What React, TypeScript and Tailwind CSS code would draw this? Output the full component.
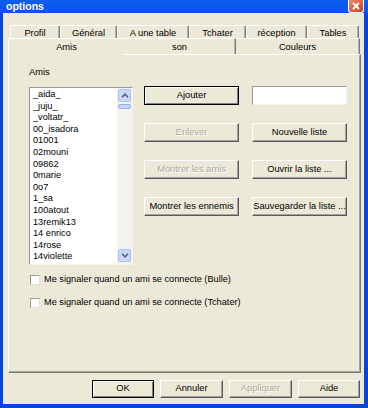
import React from 'react';
import clsx from 'clsx';

const FRIENDS = [
    '_aida_', '_juju_', '_voltatr_', '00_isadora', '01001', '02mouni', '09862', '0marie',
    '0o7', '1_sa', '100atout', '13remik13', '14 enrico', '14rose', '14violette',
];

const TOP_TABS = [
    { label: 'Profil', w: 'w-[50px]' },
    { label: 'Général', w: 'w-[57px]' },
    { label: 'A une table', w: 'w-[72px]' },
    { label: 'Tchater', w: 'w-[57px]' },
    { label: 'réception', w: 'w-[61px]' },
    { label: 'Tables', w: 'w-[52px]' },
];

interface BtnProps {
    label: string;
    disabled?: boolean;
    isDefault?: boolean;
    className?: string;
}

// classic raised button, text may overflow on both sides like the original
const Btn: React.FC<BtnProps> = ({ label, disabled, isDefault, className }) => (
    <div
        className={clsx(
            'flex items-center justify-center overflow-hidden whitespace-nowrap bg-[#ece9d8] text-[9.3px] leading-none',
            isDefault
                ? 'border border-black shadow-[inset_1px_1px_0_#fff,inset_-1px_-1px_0_#808080]'
                : 'border border-t-white border-l-white border-r-[#5a5a5a] border-b-[#5a5a5a] shadow-[inset_-1px_-1px_0_#a0a0a0]',
            disabled ? 'text-[#aca899] [text-shadow:1px_1px_0_#fff]' : 'text-black',
            className
        )}
    >
        {label}
    </div>
);

const Arrow: React.FC<{ up?: boolean }> = ({ up }) => (
    <svg width="8" height="5" viewBox="0 0 8 5" className={up ? '' : 'rotate-180'}>
        <path d="M1 4.2 L4 1.2 L7 4.2" fill="none" stroke="#4d6185" strokeWidth={1.6} />
    </svg>
);

const Check: React.FC<{ label: string }> = ({ label }) => (
    <div className="flex items-center gap-[4px] h-[11px]">
        <div className="w-[10px] h-[10px] bg-white border border-t-[#9a9a9a] border-l-[#9a9a9a] border-r-[#e4e2d6] border-b-[#e4e2d6]" />
        <span className="text-[9.2px] leading-[11px]">{label}</span>
    </div>
);

export default function App() {
    return (
        <div className="w-[368px] h-[408px] bg-[#0845d8] flex flex-col font-['Liberation_Sans',Arial,sans-serif] text-black select-none overflow-hidden">
            {/* title bar, cut off at the top */}
            <div className="h-[13px] flex items-start justify-between pl-[6px] pr-[4px] bg-gradient-to-b from-[#0b5ff0] to-[#0a52e2]">
                <span className="text-white font-bold text-[10.5px] leading-[11px] mt-[1px]">options</span>
                <div className="w-[16px] h-[13px] rounded-b-[3px] border border-t-0 border-white bg-gradient-to-br from-[#ec8a6a] to-[#cc3c18] flex items-center justify-center">
                    <svg width="8" height="8" viewBox="0 0 8 8">
                        <path d="M1 1 L7 7 M7 1 L1 7" stroke="#fff" strokeWidth={1.8} />
                    </svg>
                </div>
            </div>

            <div className="flex-1 ml-[3px] mr-[4px] mb-[4px] bg-[#ece9d8] flex flex-col pt-[12px] pl-[5px] pr-[3px]">
                {/* back row of tabs */}
                <div className="flex h-[14px] ml-[2px]">
                    {TOP_TABS.map((t) => (
                        <div
                            key={t.label}
                            className={clsx(
                                t.w,
                                'flex items-start justify-center pt-[2px] text-[9.3px] leading-[10px] border-t border-l border-r border-t-white border-l-white border-r-[#7a7a7a] shadow-[inset_-1px_0_0_#b8b5a6] rounded-t-[2px]'
                            )}
                        >
                            {t.label}
                        </div>
                    ))}
                </div>

                {/* front row of tabs */}
                <div className="flex h-[16px] items-end relative z-10 -mb-px">
                    <div className="w-[116px] h-[17px] flex items-start justify-center pt-[3px] text-[9.3px] leading-[10px] bg-[#ece9d8] border-t border-l border-t-white border-l-white rounded-t-[2px]">
                        Amis
                    </div>
                    <div className="w-[112px] h-[16px] mb-px flex items-start justify-center pt-[3px] text-[9.3px] leading-[10px] border-t border-r border-t-white border-r-[#7a7a7a] shadow-[inset_-1px_0_0_#b8b5a6]">
                        son
                    </div>
                    <div className="w-[124px] h-[16px] mb-px flex items-start justify-center pt-[3px] text-[9.3px] leading-[10px] border-t border-r border-t-white border-r-[#7a7a7a] shadow-[inset_-1px_0_0_#b8b5a6]">
                        Couleurs
                    </div>
                </div>

                {/* tab page */}
                <div className="h-[319px] border border-t-white border-l-white border-r-[#7a7a7a] border-b-[#7a7a7a] shadow-[inset_-1px_-1px_0_#a8a595] pl-[20px] pt-[11px]">
                    <div className="text-[9.3px] leading-[12px]">Amis</div>

                    <div className="flex mt-[8px]">
                        <div className="w-[104px] h-[178px] mt-px flex bg-white border border-t-[#9a9a9a] border-l-[#9a9a9a] border-r-[#f4f3ee] border-b-[#f4f3ee] overflow-hidden">
                            <div className="flex-1 pl-[3px] pt-px">
                                {FRIENDS.map((f) => (
                                    <div key={f} className="h-[11.6px] text-[9.2px] leading-[11.6px] whitespace-nowrap">
                                        {f}
                                    </div>
                                ))}
                            </div>
                            <div className="w-[15px] flex flex-col bg-[#f4f3ee] pb-[2px]">
                                <div className="h-[13px] m-px rounded-[2px] bg-[#c8d8fc] border border-[#a9c1f4] flex items-center justify-center">
                                    <Arrow up />
                                </div>
                                <div className="h-[5px] mx-px mt-px rounded-[2px] bg-[#c8d8fc] border border-[#94b0ec]" />
                                <div className="flex-1" />
                                <div className="h-[13px] mx-px rounded-[2px] bg-[#c8d8fc] border border-[#a9c1f4] flex items-center justify-center">
                                    <Arrow />
                                </div>
                            </div>
                        </div>

                        <div className="ml-[11px] grid grid-cols-[95px_95px] auto-rows-[19px] gap-x-[13px] gap-y-[18px]">
                            <Btn label="Ajouter" isDefault />
                            <div className="bg-white border border-t-[#9a9a9a] border-l-[#9a9a9a] border-r-[#f4f3ee] border-b-[#f4f3ee]" />
                            <Btn label="Enlever" disabled />
                            <Btn label="Nouvelle liste" />
                            <Btn label="Montrer les amis" disabled />
                            <Btn label="Ouvrir la liste ..." />
                            <Btn label="Montrer les ennemis" />
                            <Btn label="Sauvegarder la liste  ..." />
                        </div>
                    </div>

                    <div className="flex flex-col gap-[12px] mt-[9px] ml-px">
                        <Check label="Me signaler quand un ami se connecte (Bulle)" />
                        <Check label="Me signaler quand un ami se connecte (Tchater)" />
                    </div>
                </div>

                {/* dialog buttons */}
                <div className="flex justify-end gap-[6px] mt-[7px] mr-px">
                    <Btn label="OK" isDefault className="w-[62px] h-[18px]" />
                    <Btn label="Annuler" className="w-[63px] h-[18px]" />
                    <Btn label="Appliquer" disabled className="w-[63px] h-[18px]" />
                    <Btn label="Aide" className="w-[62px] h-[18px]" />
                </div>
            </div>
        </div>
    );
}
